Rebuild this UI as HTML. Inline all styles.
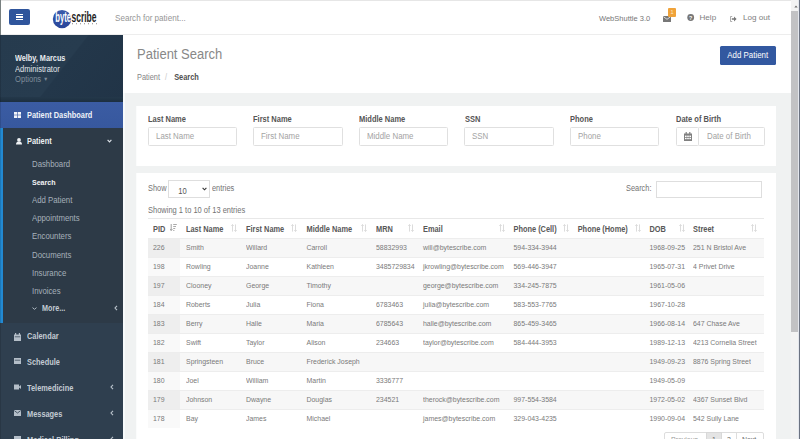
<!DOCTYPE html>
<html><head><meta charset="utf-8">
<style>
*{margin:0;padding:0;box-sizing:border-box}
html,body{width:800px;height:439px;overflow:hidden;background:#fff;font-family:"Liberation Sans",sans-serif}
.a{position:absolute;white-space:nowrap;line-height:1}
#nav{position:absolute;left:0;top:0;width:791px;height:35px;background:#fff;border-top:1px solid #e6e6e6;border-bottom:1px solid #ededed}
#burger{position:absolute;left:9px;top:8px;width:21px;height:16px;background:#2f559c;border-radius:2px}
#burger i{position:absolute;left:7px;width:7px;height:1.4px;background:#fff}
#side{position:absolute;left:0;top:35px;width:123px;height:404px;background:#2d3a47}
#user{position:absolute;left:0;top:0;width:123px;height:67px;background:linear-gradient(128deg,#263b4e 0%,#273c4f 50%,#23374a 51%,#213447 100%)}
#content{position:absolute;left:123px;top:35px;width:668px;height:404px;background:#f0f2f2}
#chead{position:absolute;left:0;top:0;width:668px;height:58px;background:#fff}
.card{position:absolute;background:#fff;box-shadow:-1px 0 0 #fbfcfc}
.lbl{position:absolute;font-weight:bold;font-size:7.5px;color:#555;white-space:nowrap;line-height:1}
.inp{position:absolute;height:19px;border:1px solid #e0e0e0;border-radius:1.5px;background:#fff;font-size:7.9px;color:#a3a3a3;padding-left:7px;line-height:17px;white-space:nowrap}
.sub{position:absolute;left:32px;font-size:7.8px;color:#a6b0ba;white-space:nowrap;line-height:1}
.mi{position:absolute;left:27px;font-size:7.4px;font-weight:bold;color:#c3cbd3;white-space:nowrap;line-height:1}
.th{font-size:7.4px;font-weight:bold;color:#585858}
.td{font-size:6.95px;color:#7a7a7a}
.t,.td,.th,.lbl,.sub,.mi{transform:scaleY(1.15);transform-origin:0 85%}
.inp span{display:inline-block;transform:scaleY(1.15);transform-origin:0 60%}
#sb{position:absolute;left:791px;top:0;width:9px;height:439px;background:#f3f3f3}
</style></head><body>

<div id="nav">
  <div id="burger"><i style="top:5px"></i><i style="top:7.3px"></i><i style="top:9.6px"></i></div>
  <!-- logo -->
  <svg class="a" style="left:50px;top:6px" width="52" height="24" viewBox="0 0 52 24">
    <defs><linearGradient id="lg" x1="0" y1="0" x2="0" y2="1"><stop offset="0" stop-color="#3a5bab"/><stop offset="1" stop-color="#28469a"/></linearGradient></defs>
    <circle cx="12" cy="12.1" r="9.2" fill="url(#lg)"/>
    <g transform="translate(0,14.8) scale(1,1.42)">
    <text x="5.2" y="0" font-family="Liberation Sans" font-size="10" font-weight="bold" fill="#fff" textLength="15.8" lengthAdjust="spacingAndGlyphs">byte</text>
    <text x="21.5" y="0" font-family="Liberation Sans" font-size="10" font-weight="bold" fill="#1e1e1e" textLength="25" lengthAdjust="spacingAndGlyphs">scribe</text>
    </g>
    <g fill="#444"><rect x="22" y="16.4" width="0.8" height="0.8"/><rect x="26" y="16.4" width="0.8" height="0.8"/><rect x="30" y="16.4" width="0.8" height="0.8"/><rect x="34" y="16.4" width="0.8" height="0.8"/><rect x="38" y="16.4" width="0.8" height="0.8"/><rect x="42" y="16.4" width="0.8" height="0.8"/><rect x="46" y="16.4" width="0.8" height="0.8"/></g>
  </svg>
  <div class="a t" style="left:115px;top:14px;font-size:8.1px;color:#969696">Search for patient...</div>
  <div class="a" style="left:599px;top:13.8px;font-size:7.5px;color:#777">WebShuttle 3.0</div>
  <!-- envelope -->
  <svg class="a" style="left:663px;top:15px" width="8" height="6" viewBox="0 0 8 6"><rect x="0" y="0" width="8" height="6" rx="0.5" fill="#777"/><path d="M0.4 0.7 L4 3.3 L7.6 0.7" stroke="#eee" stroke-width="0.8" fill="none"/></svg>
  <div class="a" style="left:667.7px;top:7.2px;width:8.6px;height:8.6px;background:#f0a33a;border-radius:1px;color:#fde7c2;font-size:5.5px;text-align:center;line-height:8.6px">1</div>
  <svg class="a" style="left:687px;top:13px" width="8" height="8" viewBox="0 0 8 8"><circle cx="3.7" cy="3.5" r="3.4" fill="#777"/><text x="3.7" y="5.6" font-family="Liberation Sans" font-weight="bold" font-size="5.4" fill="#fff" text-anchor="middle">?</text></svg>
  <div class="a" style="left:699.5px;top:13.3px;font-size:8.1px;color:#808080">Help</div>
  <svg class="a" style="left:730px;top:15px" width="7" height="6" viewBox="0 0 7 6"><path d="M2.2 0.5 H0.5 V5.5 H2.2" stroke="#999" stroke-width="0.8" fill="none"/><path d="M1.8 2.2 H4 V0.6 L6.6 3 L4 5.4 V3.8 H1.8Z" fill="#777"/></svg>
  <div class="a" style="left:743px;top:13.3px;font-size:8.1px;color:#808080">Log out</div>
</div>

<div id="side">
  <div id="user">
    <div class="a t" style="left:15px;top:20px;font-size:7.3px;font-weight:bold;color:#e9edf1">Welby, Marcus</div>
    <div class="a t" style="left:15px;top:30.8px;font-size:7.6px;color:#e2e7ec">Administrator</div>
    <div class="a t" style="left:15px;top:40.8px;font-size:7.6px;color:#7f8d9b">Options <span style="font-size:5px;position:relative;top:-1px">&#9660;</span></div>
  </div>
  <div class="a" style="left:0;top:62px;width:123px;height:5px;background:linear-gradient(#24384a,#1c2f40)"></div>
  <div class="a" style="left:0;top:67px;width:123px;height:26px;background:linear-gradient(#3b5ca3,#37589e)"></div>
  <svg class="a" style="left:14px;top:76.8px" width="7" height="6" viewBox="0 0 7 6"><g fill="#f2f4fa"><rect x="0" y="0" width="3.2" height="2.7"/><rect x="3.8" y="0" width="3.2" height="2.7"/><rect x="0" y="3.3" width="3.2" height="2.7"/><rect x="3.8" y="3.3" width="3.2" height="2.7"/></g></svg>
  <div class="mi" style="top:76.8px;color:#eef2f8">Patient Dashboard</div>
  <div class="a" style="left:0;top:93px;width:3px;height:195px;background:#2289d2"></div>
  <svg class="a" style="left:16.4px;top:102.8px" width="6" height="7" viewBox="0 0 6 7"><circle cx="3" cy="1.9" r="1.9" fill="#eef1f4"/><path d="M0 6.4 Q0 3.4 3 3.4 Q6 3.4 6 6.4Z" fill="#eef1f4"/></svg>
  <div class="mi" style="top:102.5px;color:#eef1f4">Patient</div>
  <svg class="a" style="left:107px;top:104px" width="5" height="4" viewBox="0 0 5 4"><path d="M0.6 0.9 L2.5 2.8 L4.4 0.9" stroke="#dde3e9" stroke-width="1.2" fill="none"/></svg>
  <div class="sub" style="top:125.5px">Dashboard</div>
  <div class="sub" style="top:143.5px;color:#f2f4f6;font-weight:bold;font-size:7.05px">Search</div>
  <div class="sub" style="top:161.5px">Add Patient</div>
  <div class="sub" style="top:179.5px">Appointments</div>
  <div class="sub" style="top:197.5px">Encounters</div>
  <div class="sub" style="top:216.5px">Documents</div>
  <div class="sub" style="top:234.5px">Insurance</div>
  <div class="sub" style="top:252.5px">Invoices</div>
  <svg class="a" style="left:32px;top:272px" width="5" height="3" viewBox="0 0 5 3"><path d="M0.5 0.6 L2.5 2.3 L4.5 0.6" stroke="#b0bac4" stroke-width="1" fill="none"/></svg>
  <div class="sub" style="left:42px;top:270.3px;color:#c4ccd4;font-weight:bold;font-size:7.2px">More...</div>
  <svg class="a" style="left:114px;top:270px" width="4" height="6" viewBox="0 0 4 6"><path d="M3 0.8 L1 3 L3 5.2" stroke="#bcc5ce" stroke-width="1.1" fill="none"/></svg>
  <!-- lower section -->
  <div class="a" style="left:0;top:288px;width:123px;height:116px;background:#2f3f4f"></div>
  <svg class="a" style="left:14px;top:297.5px" width="7" height="8" viewBox="0 0 7 8"><rect x="0" y="1.5" width="7" height="6.5" fill="#b4bec8"/><rect x="1" y="0" width="1.2" height="2" fill="#b4bec8"/><rect x="4.8" y="0" width="1.2" height="2" fill="#b4bec8"/><rect x="0.8" y="3.5" width="5.4" height="0.7" fill="#2f3f4f"/></svg>
  <div class="mi" style="top:297.5px">Calendar</div>
  <svg class="a" style="left:14px;top:323px" width="7" height="6" viewBox="0 0 7 6"><rect x="0" y="0" width="7" height="6" fill="#b4bec8"/><rect x="0.8" y="1.8" width="5.4" height="0.7" fill="#2f3f4f"/></svg>
  <div class="mi" style="top:323.5px">Schedule</div>
  <svg class="a" style="left:14px;top:349px" width="7" height="6" viewBox="0 0 7 6"><rect x="0" y="0.5" width="5" height="5" fill="#b4bec8"/><path d="M4.5 3 L7 1 V5Z" fill="#b4bec8"/></svg>
  <div class="mi" style="top:349.5px">Telemedicine</div>
  <svg class="a" style="left:110px;top:349px" width="4" height="6" viewBox="0 0 4 6"><path d="M3 0.8 L1 3 L3 5.2" stroke="#bcc5ce" stroke-width="1.1" fill="none"/></svg>
  <svg class="a" style="left:14px;top:375px" width="7" height="6" viewBox="0 0 7 6"><rect x="0" y="0" width="7" height="6" fill="#b4bec8"/><path d="M0.3 0.6 L3.5 3 L6.7 0.6" stroke="#2f3f4f" stroke-width="0.8" fill="none"/></svg>
  <div class="mi" style="top:375.5px">Messages</div>
  <svg class="a" style="left:110px;top:375px" width="4" height="6" viewBox="0 0 4 6"><path d="M3 0.8 L1 3 L3 5.2" stroke="#bcc5ce" stroke-width="1.1" fill="none"/></svg>
  <svg class="a" style="left:14px;top:401px" width="7" height="6" viewBox="0 0 7 6"><rect x="0" y="0" width="7" height="6" fill="#b4bec8"/></svg>
  <div class="mi" style="top:401.5px">Medical Billing</div>
  <svg class="a" style="left:110px;top:401px" width="4" height="6" viewBox="0 0 4 6"><path d="M3 0.8 L1 3 L3 5.2" stroke="#bcc5ce" stroke-width="1.1" fill="none"/></svg>
</div>

<div id="content">
  <div class="a" style="left:0;top:58px;width:1.5px;height:346px;background:#f7fafb"></div>
  <div id="chead">
    <div class="a" style="left:14px;top:12.5px;font-size:13px;color:#888;transform:scaleY(1.08);transform-origin:0 85%">Patient Search</div>
    <div class="a t" style="left:14px;top:38.5px;font-size:7.4px;color:#858585">Patient <span style="color:#c8c8c8;margin:0 5px 0 3px">/</span> <b style="color:#505050">Search</b></div>
    <div class="a" style="left:596.5px;top:11px;width:56.5px;height:19px;background:#3258a0;border-radius:1.5px;color:#fff;font-size:7.9px;text-align:center;line-height:20px"><span style="display:inline-block;transform:scaleY(1.15);transform-origin:0 60%">Add Patient</span></div>
  </div>
  <div class="card" style="left:14px;top:71px;width:639px;height:60px">
    <div class="lbl" style="left:11px;top:10px">Last Name</div>
    <div class="inp" style="left:11px;top:21px;width:89px"><span>Last Name</span></div>
    <div class="lbl" style="left:116px;top:10px">First Name</div>
    <div class="inp" style="left:116px;top:21px;width:90px"><span>First Name</span></div>
    <div class="lbl" style="left:222px;top:10px">Middle Name</div>
    <div class="inp" style="left:222px;top:21px;width:89px"><span>Middle Name</span></div>
    <div class="lbl" style="left:328px;top:10px">SSN</div>
    <div class="inp" style="left:327px;top:21px;width:90px"><span>SSN</span></div>
    <div class="lbl" style="left:433px;top:10px">Phone</div>
    <div class="inp" style="left:433px;top:21px;width:89px"><span>Phone</span></div>
    <div class="lbl" style="left:539px;top:10px">Date of Birth</div>
    <div class="inp" style="left:539px;top:21px;width:23px;padding:0"><svg style="position:absolute;left:6.5px;top:4px" width="8" height="9" viewBox="0 0 8 9"><rect x="0" y="1.5" width="8" height="7.5" fill="#808080"/><g fill="#fff"><rect x="1" y="3.6" width="1.6" height="1.4"/><rect x="3.2" y="3.6" width="1.6" height="1.4"/><rect x="5.4" y="3.6" width="1.6" height="1.4"/><rect x="1" y="5.8" width="1.6" height="1.4"/><rect x="3.2" y="5.8" width="1.6" height="1.4"/><rect x="5.4" y="5.8" width="1.6" height="1.4"/></g><rect x="1.6" y="0" width="1.2" height="2.5" fill="#808080"/><rect x="5.2" y="0" width="1.2" height="2.5" fill="#808080"/></svg></div>
    <div class="inp" style="left:561px;top:21px;width:67px;padding-left:8px"><span>Date of Birth</span></div>
  </div>
  <div class="card" style="left:14px;top:138px;width:639px;height:280px">
    <div class="a t" style="left:11px;top:12.2px;font-size:7.4px;color:#737373">Show</div>
    <div class="a" style="left:31.3px;top:7.4px;width:42px;height:17.5px;border:1px solid #dedede;background:#fff"></div>
    <div class="a t" style="left:41.3px;top:15.0px;font-size:7.6px;color:#555">10</div>
    <svg class="a" style="left:65px;top:14px" width="5" height="4" viewBox="0 0 5 4"><path d="M0.6 0.8 L2.5 2.8 L4.4 0.8" stroke="#333" stroke-width="1.1" fill="none"/></svg>
    <div class="a t" style="left:75px;top:12.2px;font-size:7.4px;color:#737373">entries</div>
    <div class="a t" style="left:489px;top:12.2px;font-size:7.4px;color:#737373">Search:</div>
    <div class="a" style="left:519px;top:8px;width:106px;height:16.5px;border:1px solid #dedede;background:#fff"></div>
    <div class="a t" style="left:11px;top:33.7px;font-size:7.5px;color:#737373">Showing 1 to 10 of 13 entries</div>
    <div class="a" style="left:11px;top:45px;width:616px;height:1px;background:#e8e8e8"></div>
    <div class="a th" style="left:16px;top:52.7px">PID</div>
    <div class="a th" style="left:49px;top:52.7px">Last Name</div>
    <div class="a th" style="left:109px;top:52.7px">First Name</div>
    <div class="a th" style="left:169.5px;top:52.7px">Middle Name</div>
    <div class="a th" style="left:239px;top:52.7px">MRN</div>
    <div class="a th" style="left:286px;top:52.7px">Email</div>
    <div class="a th" style="left:376.5px;top:52.7px">Phone (Cell)</div>
    <div class="a th" style="left:440.7px;top:52.7px">Phone (Home)</div>
    <div class="a th" style="left:512.5px;top:52.7px">DOB</div>
    <div class="a th" style="left:556px;top:52.7px">Street</div>
    <svg class="a" style="left:33.3px;top:51px" width="7" height="7" viewBox="0 0 7 7"><path d="M1.2 0 V6.3 M0 5 L1.2 6.6 L2.4 5" stroke="#999" stroke-width="0.9" fill="none"/><g fill="#aaa"><rect x="3.2" y="0" width="3.6" height="1"/><rect x="3.2" y="2" width="2.8" height="1"/><rect x="3.2" y="4" width="2" height="1"/><rect x="3.2" y="6" width="1.2" height="1"/></g></svg>
    <svg class="a" style="left:93.5px;top:51px" width="6" height="8" viewBox="0 0 6 8"><path d="M1.5 7.6 V0.6 M0.3 1.8 L1.5 0.5 L2.7 1.8 M4.5 0.4 V7.4 M3.3 6.2 L4.5 7.5 L5.7 6.2" stroke="#dcdcdc" stroke-width="1" fill="none"/></svg>
    <svg class="a" style="left:154.1px;top:51px" width="6" height="8" viewBox="0 0 6 8"><path d="M1.5 7.6 V0.6 M0.3 1.8 L1.5 0.5 L2.7 1.8 M4.5 0.4 V7.4 M3.3 6.2 L4.5 7.5 L5.7 6.2" stroke="#dcdcdc" stroke-width="1" fill="none"/></svg>
    <svg class="a" style="left:224.0px;top:51px" width="6" height="8" viewBox="0 0 6 8"><path d="M1.5 7.6 V0.6 M0.3 1.8 L1.5 0.5 L2.7 1.8 M4.5 0.4 V7.4 M3.3 6.2 L4.5 7.5 L5.7 6.2" stroke="#dcdcdc" stroke-width="1" fill="none"/></svg>
    <svg class="a" style="left:270.5px;top:51px" width="6" height="8" viewBox="0 0 6 8"><path d="M1.5 7.6 V0.6 M0.3 1.8 L1.5 0.5 L2.7 1.8 M4.5 0.4 V7.4 M3.3 6.2 L4.5 7.5 L5.7 6.2" stroke="#dcdcdc" stroke-width="1" fill="none"/></svg>
    <svg class="a" style="left:361.5px;top:51px" width="6" height="8" viewBox="0 0 6 8"><path d="M1.5 7.6 V0.6 M0.3 1.8 L1.5 0.5 L2.7 1.8 M4.5 0.4 V7.4 M3.3 6.2 L4.5 7.5 L5.7 6.2" stroke="#dcdcdc" stroke-width="1" fill="none"/></svg>
    <svg class="a" style="left:425.5px;top:51px" width="6" height="8" viewBox="0 0 6 8"><path d="M1.5 7.6 V0.6 M0.3 1.8 L1.5 0.5 L2.7 1.8 M4.5 0.4 V7.4 M3.3 6.2 L4.5 7.5 L5.7 6.2" stroke="#dcdcdc" stroke-width="1" fill="none"/></svg>
    <svg class="a" style="left:497.5px;top:51px" width="6" height="8" viewBox="0 0 6 8"><path d="M1.5 7.6 V0.6 M0.3 1.8 L1.5 0.5 L2.7 1.8 M4.5 0.4 V7.4 M3.3 6.2 L4.5 7.5 L5.7 6.2" stroke="#dcdcdc" stroke-width="1" fill="none"/></svg>
    <svg class="a" style="left:541.5px;top:51px" width="6" height="8" viewBox="0 0 6 8"><path d="M1.5 7.6 V0.6 M0.3 1.8 L1.5 0.5 L2.7 1.8 M4.5 0.4 V7.4 M3.3 6.2 L4.5 7.5 L5.7 6.2" stroke="#dcdcdc" stroke-width="1" fill="none"/></svg>
    <svg class="a" style="left:613.5px;top:51px" width="6" height="8" viewBox="0 0 6 8"><path d="M1.5 7.6 V0.6 M0.3 1.8 L1.5 0.5 L2.7 1.8 M4.5 0.4 V7.4 M3.3 6.2 L4.5 7.5 L5.7 6.2" stroke="#dcdcdc" stroke-width="1" fill="none"/></svg>
    <div class="a" style="left:11px;top:65px;width:616px;height:19px;background:#f7f7f7;border-top:1px solid #ededed"></div>
    <div class="a" style="left:11px;top:66px;width:31.5px;height:18px;background:#eeeeee"></div>
    <div class="a td" style="left:16px;top:72.45px">226</div>
    <div class="a td" style="left:49px;top:72.45px">Smith</div>
    <div class="a td" style="left:109px;top:72.45px">Willard</div>
    <div class="a td" style="left:169.5px;top:72.45px">Carroll</div>
    <div class="a td" style="left:239px;top:72.45px">58832993</div>
    <div class="a td" style="left:286px;top:72.45px">will@bytescribe.com</div>
    <div class="a td" style="left:376.5px;top:72.45px">594-334-3944</div>
    <div class="a td" style="left:512.5px;top:72.45px">1968-09-25</div>
    <div class="a td" style="left:556px;top:72.45px">251 N Bristol Ave</div>
    <div class="a" style="left:11px;top:84px;width:616px;height:19px;background:#fff;border-top:1px solid #ededed"></div>
    <div class="a" style="left:11px;top:85px;width:31.5px;height:18px;background:#f9f9f9"></div>
    <div class="a td" style="left:16px;top:91.45px">198</div>
    <div class="a td" style="left:49px;top:91.45px">Rowling</div>
    <div class="a td" style="left:109px;top:91.45px">Joanne</div>
    <div class="a td" style="left:169.5px;top:91.45px">Kathleen</div>
    <div class="a td" style="left:239px;top:91.45px">3485729834</div>
    <div class="a td" style="left:286px;top:91.45px">jkrowling@bytescribe.com</div>
    <div class="a td" style="left:376.5px;top:91.45px">569-446-3947</div>
    <div class="a td" style="left:512.5px;top:91.45px">1965-07-31</div>
    <div class="a td" style="left:556px;top:91.45px">4 Privet Drive</div>
    <div class="a" style="left:11px;top:103px;width:616px;height:19px;background:#f7f7f7;border-top:1px solid #ededed"></div>
    <div class="a" style="left:11px;top:104px;width:31.5px;height:18px;background:#eeeeee"></div>
    <div class="a td" style="left:16px;top:110.45px">197</div>
    <div class="a td" style="left:49px;top:110.45px">Clooney</div>
    <div class="a td" style="left:109px;top:110.45px">George</div>
    <div class="a td" style="left:169.5px;top:110.45px">Timothy</div>
    <div class="a td" style="left:286px;top:110.45px">george@bytescribe.com</div>
    <div class="a td" style="left:376.5px;top:110.45px">334-245-7875</div>
    <div class="a td" style="left:512.5px;top:110.45px">1961-05-06</div>
    <div class="a" style="left:11px;top:122px;width:616px;height:19px;background:#fff;border-top:1px solid #ededed"></div>
    <div class="a" style="left:11px;top:123px;width:31.5px;height:18px;background:#f9f9f9"></div>
    <div class="a td" style="left:16px;top:129.45px">184</div>
    <div class="a td" style="left:49px;top:129.45px">Roberts</div>
    <div class="a td" style="left:109px;top:129.45px">Julia</div>
    <div class="a td" style="left:169.5px;top:129.45px">Fiona</div>
    <div class="a td" style="left:239px;top:129.45px">6783463</div>
    <div class="a td" style="left:286px;top:129.45px">julia@bytescribe.com</div>
    <div class="a td" style="left:376.5px;top:129.45px">583-553-7765</div>
    <div class="a td" style="left:512.5px;top:129.45px">1967-10-28</div>
    <div class="a" style="left:11px;top:141px;width:616px;height:19px;background:#f7f7f7;border-top:1px solid #ededed"></div>
    <div class="a" style="left:11px;top:142px;width:31.5px;height:18px;background:#eeeeee"></div>
    <div class="a td" style="left:16px;top:148.45px">183</div>
    <div class="a td" style="left:49px;top:148.45px">Berry</div>
    <div class="a td" style="left:109px;top:148.45px">Halle</div>
    <div class="a td" style="left:169.5px;top:148.45px">Maria</div>
    <div class="a td" style="left:239px;top:148.45px">6785643</div>
    <div class="a td" style="left:286px;top:148.45px">halle@bytescribe.com</div>
    <div class="a td" style="left:376.5px;top:148.45px">865-459-3465</div>
    <div class="a td" style="left:512.5px;top:148.45px">1966-08-14</div>
    <div class="a td" style="left:556px;top:148.45px">647 Chase Ave</div>
    <div class="a" style="left:11px;top:160px;width:616px;height:19px;background:#fff;border-top:1px solid #ededed"></div>
    <div class="a" style="left:11px;top:161px;width:31.5px;height:18px;background:#f9f9f9"></div>
    <div class="a td" style="left:16px;top:167.45px">182</div>
    <div class="a td" style="left:49px;top:167.45px">Swift</div>
    <div class="a td" style="left:109px;top:167.45px">Taylor</div>
    <div class="a td" style="left:169.5px;top:167.45px">Alison</div>
    <div class="a td" style="left:239px;top:167.45px">234663</div>
    <div class="a td" style="left:286px;top:167.45px">taylor@bytescribe.com</div>
    <div class="a td" style="left:376.5px;top:167.45px">584-444-3953</div>
    <div class="a td" style="left:512.5px;top:167.45px">1989-12-13</div>
    <div class="a td" style="left:556px;top:167.45px">4213 Cornelia Street</div>
    <div class="a" style="left:11px;top:179px;width:616px;height:19px;background:#f7f7f7;border-top:1px solid #ededed"></div>
    <div class="a" style="left:11px;top:180px;width:31.5px;height:18px;background:#eeeeee"></div>
    <div class="a td" style="left:16px;top:186.45px">181</div>
    <div class="a td" style="left:49px;top:186.45px">Springsteen</div>
    <div class="a td" style="left:109px;top:186.45px">Bruce</div>
    <div class="a td" style="left:169.5px;top:186.45px">Frederick Joseph</div>
    <div class="a td" style="left:512.5px;top:186.45px">1949-09-23</div>
    <div class="a td" style="left:556px;top:186.45px">8876 Spring Street</div>
    <div class="a" style="left:11px;top:198px;width:616px;height:19px;background:#fff;border-top:1px solid #ededed"></div>
    <div class="a" style="left:11px;top:199px;width:31.5px;height:18px;background:#f9f9f9"></div>
    <div class="a td" style="left:16px;top:205.45px">180</div>
    <div class="a td" style="left:49px;top:205.45px">Joel</div>
    <div class="a td" style="left:109px;top:205.45px">William</div>
    <div class="a td" style="left:169.5px;top:205.45px">Martin</div>
    <div class="a td" style="left:239px;top:205.45px">3336777</div>
    <div class="a td" style="left:512.5px;top:205.45px">1949-05-09</div>
    <div class="a" style="left:11px;top:217px;width:616px;height:19px;background:#f7f7f7;border-top:1px solid #ededed"></div>
    <div class="a" style="left:11px;top:218px;width:31.5px;height:18px;background:#eeeeee"></div>
    <div class="a td" style="left:16px;top:224.45px">179</div>
    <div class="a td" style="left:49px;top:224.45px">Johnson</div>
    <div class="a td" style="left:109px;top:224.45px">Dwayne</div>
    <div class="a td" style="left:169.5px;top:224.45px">Douglas</div>
    <div class="a td" style="left:239px;top:224.45px">234521</div>
    <div class="a td" style="left:286px;top:224.45px">therock@bytescribe.com</div>
    <div class="a td" style="left:376.5px;top:224.45px">997-554-3584</div>
    <div class="a td" style="left:512.5px;top:224.45px">1972-05-02</div>
    <div class="a td" style="left:556px;top:224.45px">4367 Sunset Blvd</div>
    <div class="a" style="left:11px;top:236px;width:616px;height:19px;background:#fff;border-top:1px solid #ededed"></div>
    <div class="a" style="left:11px;top:237px;width:31.5px;height:18px;background:#f9f9f9"></div>
    <div class="a td" style="left:16px;top:243.45px">178</div>
    <div class="a td" style="left:49px;top:243.45px">Bay</div>
    <div class="a td" style="left:109px;top:243.45px">James</div>
    <div class="a td" style="left:169.5px;top:243.45px">Michael</div>
    <div class="a td" style="left:286px;top:243.45px">james@bytescribe.com</div>
    <div class="a td" style="left:376.5px;top:243.45px">329-043-4235</div>
    <div class="a td" style="left:512.5px;top:243.45px">1990-09-04</div>
    <div class="a td" style="left:556px;top:243.45px">542 Sully Lane</div>
    <div class="a" style="left:527px;top:259px;width:100px;height:20px;border:1px solid #ddd;border-radius:2px;background:#fff"></div>
    <div class="a" style="left:569px;top:259px;width:16px;height:20px;background:#e4e4e4;border:1px solid #d8d8d8"></div>
    <div class="a" style="left:599px;top:259px;width:1px;height:20px;background:#ddd"></div>
    <div class="a td" style="left:534px;top:264px;color:#999">Previous</div>
    <div class="a td" style="left:575px;top:264px;color:#666">1</div>
    <div class="a td" style="left:590px;top:264px;color:#666">2</div>
    <div class="a td" style="left:605px;top:264px;color:#666">Next</div>
  </div>
</div>
<div class="a" style="left:0;top:0;width:1px;height:35px;background:#788080"></div>
<div class="a" style="left:0;top:35px;width:1px;height:404px;background:rgba(0,0,0,0.12)"></div>
<div id="sb">
  <svg class="a" style="left:2.5px;top:5px" width="4" height="3" viewBox="0 0 4 3"><path d="M0.3 2.6 L2 0.6 L3.7 2.6Z" fill="#707070"/></svg>
  <div class="a" style="left:0;top:10.5px;width:7px;height:321px;background:#c2c2c4"></div>
  <div class="a" style="left:7px;top:0;width:1px;height:439px;background:#e4e7ee"></div>
  <div class="a" style="left:8px;top:0;width:1px;height:439px;background:#6c7382"></div>
</div>
</body></html>
